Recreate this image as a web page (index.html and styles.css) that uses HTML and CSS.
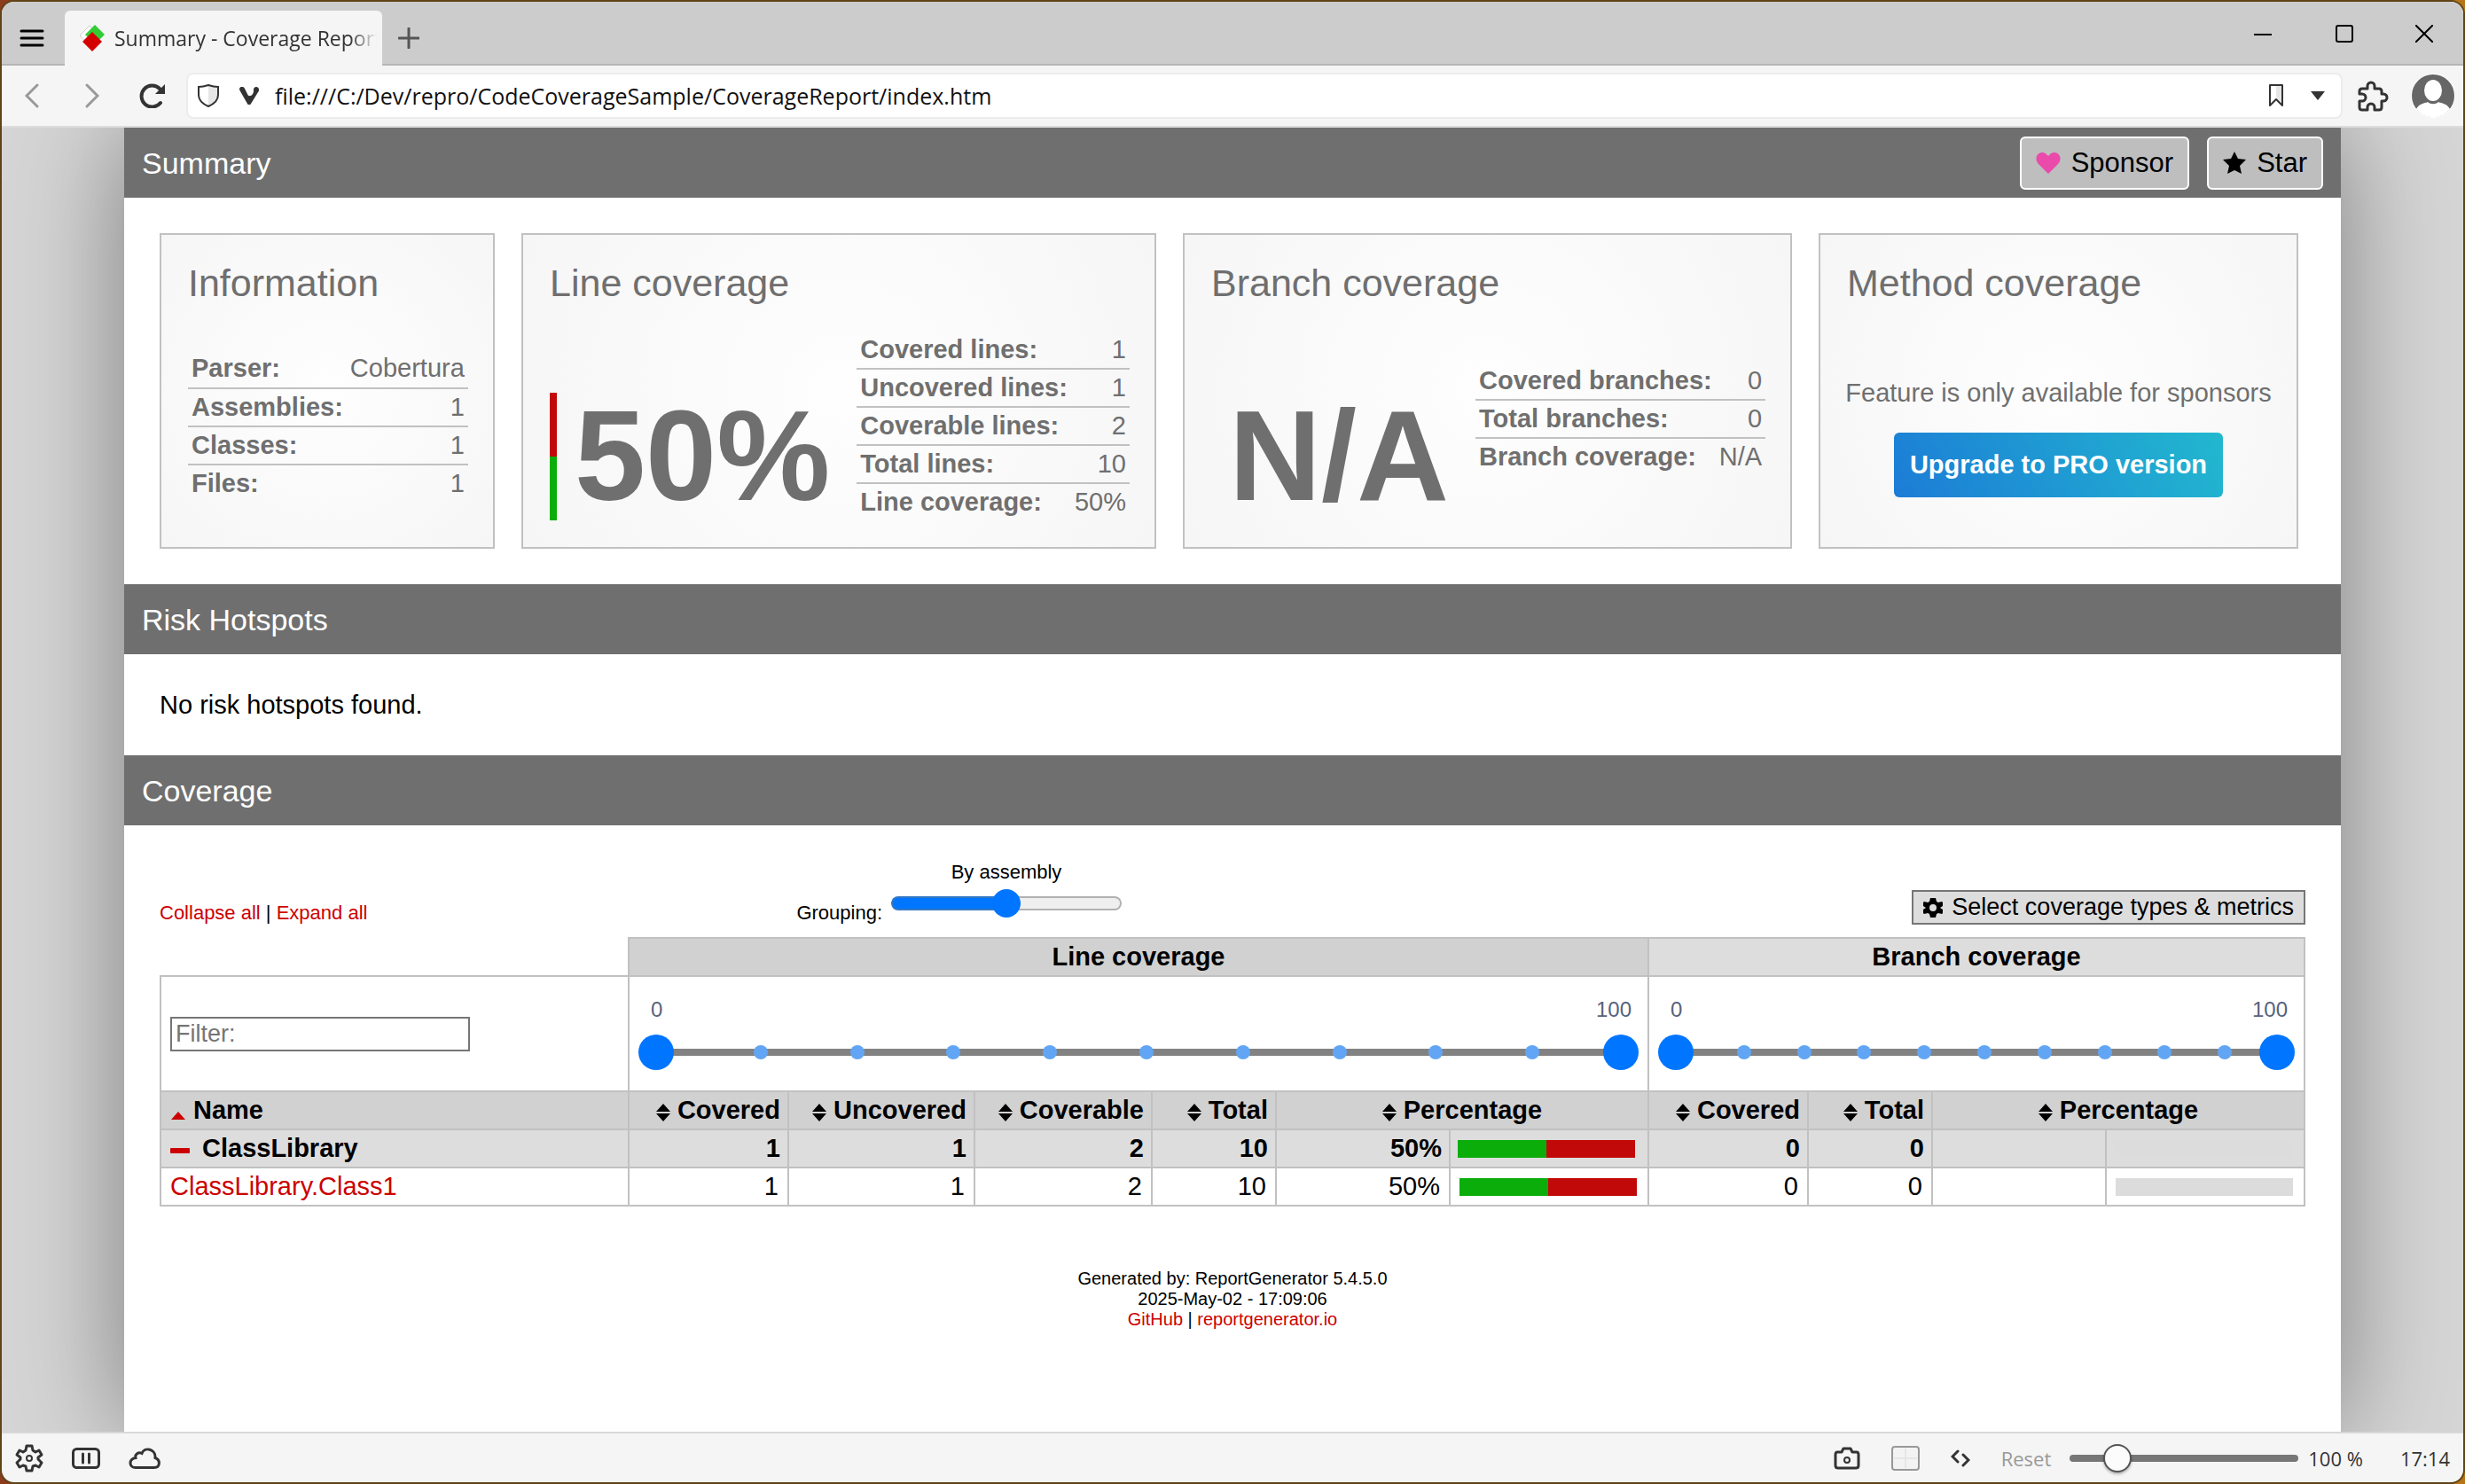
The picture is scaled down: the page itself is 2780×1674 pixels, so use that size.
FILE: index.html
```html
<!DOCTYPE html>
<html lang="en">
<head>
<meta charset="utf-8">
<title>Summary - Coverage Report</title>
<link rel="stylesheet" href="styles.css">
</head>
<body>
<div class="window">
  <header class="tabbar">
    <button class="icon-btn menu-btn" aria-label="Menu"><svg width="28" height="20" viewBox="0 0 28 20"><path d="M2 2h24M2 10h24M2 18h24" stroke="#000" stroke-width="3" stroke-linecap="round"/></svg></button>
    <div class="tab">
      <svg width="30" height="30" viewBox="0 0 30 30"><path d="M12 1l11 11-11 11L1 12z" fill="#fff" stroke="#ccc"/><path d="M18 0l11 11-11 11L7 11z" fill="#3c3"/><path d="M15 8l11 11-11 11L4 19z" fill="#d40000"/></svg>
      <span class="tab-title">Summary - Coverage Report</span>
    </div>
    <button class="icon-btn new-tab" aria-label="New tab"><svg width="24" height="24" viewBox="0 0 24 24"><path d="M12 1v22M1 12h22" stroke="#555" stroke-width="3" stroke-linecap="round"/></svg></button>
    <div class="window-controls">
      <button class="icon-btn" aria-label="Minimize"><svg width="20" height="20" viewBox="0 0 20 20"><path d="M0 11h20" stroke="#000" stroke-width="2"/></svg></button>
      <button class="icon-btn" aria-label="Maximize"><svg width="20" height="20" viewBox="0 0 20 20"><rect x="1" y="1" width="18" height="18" rx="2" fill="none" stroke="#000" stroke-width="2"/></svg></button>
      <button class="icon-btn" aria-label="Close"><svg width="20" height="20" viewBox="0 0 20 20"><path d="M0 0l20 20M20 0L0 20" stroke="#000" stroke-width="2"/></svg></button>
    </div>
  </header>
  <nav class="toolbar">
    <button class="icon-btn" aria-label="Back"><svg width="16" height="28" viewBox="0 0 16 28"><path d="M14 2L2 14l12 12" fill="none" stroke="#999" stroke-width="3" stroke-linecap="round"/></svg></button>
    <button class="icon-btn" aria-label="Forward"><svg width="16" height="28" viewBox="0 0 16 28"><path d="M2 2l12 12L2 26" fill="none" stroke="#999" stroke-width="3" stroke-linecap="round"/></svg></button>
    <button class="icon-btn" aria-label="Reload"><svg width="30" height="28" viewBox="0 0 30 28"><path d="M24 22A12 12 0 1 1 23 6" fill="none" stroke="#333" stroke-width="4" stroke-linecap="round"/><path d="M29 1v11H18z" fill="#333"/></svg></button>
    <div class="address">
      <svg width="26" height="28" viewBox="0 0 26 28"><path d="M13 2v24c7-3 11-8 11-13V4C19 4 16 3 13 2z" fill="#e6e6e6"/><path d="M13 2C10 3 7 4 2 4v9c0 5 4 10 11 13 7-3 11-8 11-13V4C19 4 16 3 13 2z" fill="none" stroke="#333" stroke-width="2"/></svg>
      <svg width="22" height="20" viewBox="0 0 22 20"><path d="M0 3C0-1 5-1 6 2l3 6c1 3 4 3 6 0 1-2 1-3 1-5 0-4 6-4 6 0 0 1 0 2-1 3l-8 13c-1 2-3 2-4 0L1 5z" fill="#333"/></svg>
      <input class="url" type="text" aria-label="Address" value="file:///C:/Dev/repro/CodeCoverageSample/CoverageReport/index.htm">
      <button class="icon-btn" aria-label="Bookmark"><svg width="18" height="28" viewBox="0 0 18 28"><path d="M9 3h6v19l-6-6z" fill="#e6e6e6"/><path d="M2 2h14v23l-7-7-7 7z" fill="none" stroke="#333" stroke-width="2" stroke-linejoin="round"/></svg></button>
      <button class="icon-btn" aria-label="Show history"><svg width="16" height="10" viewBox="0 0 16 10"><path d="M0 0h16L8 10z" fill="#333"/></svg></button>
    </div>
    <button class="icon-btn" aria-label="Extensions"><svg width="35" height="35" viewBox="0 0 35 35"><path d="M5 9h6V6a4 4 0 0 1 8 0v3h5q3 0 3 3v3h2a4 4 0 0 1 0 8h-2v7q0 3-3 3h-5v-3a4 4 0 0 0-8 0v3H5q-3 0-3-3v-7h3a4 4 0 0 0 0-8H2v-3q0-3 3-3z" fill="none" stroke="#333" stroke-width="3" stroke-linejoin="round"/></svg></button>
    <button class="icon-btn" aria-label="Profile"><svg width="50" height="50" viewBox="0 0 50 50"><circle cx="25" cy="25" r="25" fill="#fff"/><circle cx="25" cy="25" r="24" fill="#666"/><ellipse cx="25" cy="19" rx="10" ry="12" fill="#fff"/><path d="M6 40c4-7 9-6 13-8 3 3 9 3 12 0 4 2 9 1 13 8a24 24 0 0 1-38 0z" fill="#fff"/></svg></button>
  </nav>

  <div class="viewport">
    <main class="report">
      <h1 class="bar">Summary
        <span class="bar-buttons">
          <a class="action" href="#sponsor"><svg width="28" height="24" viewBox="0 0 28 24"><path d="M14 24L3 13C-4 5 5-4 12 2l2 2 2-2c7-6 16 3 9 11z" fill="#ea4aaa"/></svg>Sponsor</a>
          <a class="action" href="#star"><svg width="26" height="25" viewBox="0 0 26 25"><path d="M13 0l4 8 9 1-7 7 2 9-8-4-8 4 2-9-7-7 9-1z"/></svg>Star</a>
        </span>
      </h1>

      <section class="cards">
        <div class="card">
          <h2 class="card-title">Information</h2>
          <div class="card-body centered">
            <table class="facts">
              <tr><th>Parser:</th><td>Cobertura</td></tr>
              <tr><th>Assemblies:</th><td>1</td></tr>
              <tr><th>Classes:</th><td>1</td></tr>
              <tr><th>Files:</th><td>1</td></tr>
            </table>
          </div>
        </div>
        <div class="card">
          <h2 class="card-title">Line coverage</h2>
          <div class="card-body">
            <div class="big with-bar">50%</div>
            <table class="facts">
              <tr><th>Covered lines:</th><td>1</td></tr>
              <tr><th>Uncovered lines:</th><td>1</td></tr>
              <tr><th>Coverable lines:</th><td>2</td></tr>
              <tr><th>Total lines:</th><td>10</td></tr>
              <tr><th>Line coverage:</th><td>50%</td></tr>
            </table>
          </div>
        </div>
        <div class="card">
          <h2 class="card-title">Branch coverage</h2>
          <div class="card-body">
            <div class="big">N/A</div>
            <table class="facts raised">
              <tr><th>Covered branches:</th><td>0</td></tr>
              <tr><th>Total branches:</th><td>0</td></tr>
              <tr><th>Branch coverage:</th><td>N/A</td></tr>
            </table>
          </div>
        </div>
        <div class="card">
          <h2 class="card-title">Method coverage</h2>
          <div class="card-body sponsor-body">
            <p class="note">Feature is only available for sponsors</p>
            <a class="pro" href="#pro">Upgrade to PRO version</a>
          </div>
        </div>
      </section>

      <h1 class="bar">Risk Hotspots</h1>
      <p class="empty">No risk hotspots found.</p>

      <h1 class="bar">Coverage</h1>
      <section class="coverage">
        <div class="controls">
          <div class="toggles"><a href="#collapse">Collapse all</a> | <a href="#expand">Expand all</a></div>
          <div class="grouping">
            <label for="grouping">Grouping:</label>
            <div class="grouping-slider"><output for="grouping">By assembly</output><input id="grouping" class="group-range" type="range" min="-1" max="1" value="0"></div>
          </div>
          <button class="select-types"><svg width="22" height="22" viewBox="0 0 22 22"><path fill-rule="evenodd" d="M8 0h6l1 4 2 1 4-1 1 1v4l-3 2 3 2v4l-1 1-4-1-2 1-1 4H8l-1-4-2-1-4 1-1-1v-4l3-2-3-2V5l1-1 4 1 2-1zM11 7a4 4 0 1 0 0 8 4 4 0 0 0 0-8z"/></svg>Select coverage types &amp; metrics</button>
        </div>

        <table class="grid">
          <colgroup><col><col class="w180"><col class="w210"><col class="w200"><col class="w140"><col class="w196"><col class="w224"><col class="w180"><col class="w140"><col class="w196"><col class="w224"></colgroup>
          <thead>
            <tr class="groups"><td class="blank"></td><th class="dark" colspan="6">Line coverage</th><th class="light" colspan="4">Branch coverage</th></tr>
            <tr class="filters">
              <td><input class="filter" type="text" placeholder="Filter:" aria-label="Filter"></td>
              <td colspan="6">
                <div class="limits"><span>0</span><span>100</span></div>
                <div class="slider">
                  <div class="ticks"><i></i><i></i><i></i><i></i><i></i><i></i><i></i><i></i><i></i></div>
                  <input type="range" min="0" max="100" value="0" aria-label="Minimum line coverage"><input type="range" min="0" max="100" value="100" aria-label="Maximum line coverage">
                </div>
              </td>
              <td colspan="4">
                <div class="limits"><span>0</span><span>100</span></div>
                <div class="slider">
                  <div class="ticks"><i></i><i></i><i></i><i></i><i></i><i></i><i></i><i></i><i></i></div>
                  <input type="range" min="0" max="100" value="0" aria-label="Minimum branch coverage"><input type="range" min="0" max="100" value="100" aria-label="Maximum branch coverage">
                </div>
              </td>
            </tr>
            <tr class="dark">
              <th class="left"><a class="sort" href="#name"><svg class="sorted" width="18" height="20" viewBox="0 0 18 20"><path d="M1 18l8-9 8 9z" fill="#c00"/></svg>Name</a></th>
              <th><a class="sort" href="#c1"><svg width="16" height="20" viewBox="0 0 16 20"><path d="M0 9l8-9 8 9zM0 11h16l-8 9z"/></svg>Covered</a></th>
              <th><a class="sort" href="#c2"><svg width="16" height="20" viewBox="0 0 16 20"><path d="M0 9l8-9 8 9zM0 11h16l-8 9z"/></svg>Uncovered</a></th>
              <th><a class="sort" href="#c3"><svg width="16" height="20" viewBox="0 0 16 20"><path d="M0 9l8-9 8 9zM0 11h16l-8 9z"/></svg>Coverable</a></th>
              <th><a class="sort" href="#c4"><svg width="16" height="20" viewBox="0 0 16 20"><path d="M0 9l8-9 8 9zM0 11h16l-8 9z"/></svg>Total</a></th>
              <th class="center" colspan="2"><a class="sort" href="#c5"><svg width="16" height="20" viewBox="0 0 16 20"><path d="M0 9l8-9 8 9zM0 11h16l-8 9z"/></svg>Percentage</a></th>
              <th><a class="sort" href="#c6"><svg width="16" height="20" viewBox="0 0 16 20"><path d="M0 9l8-9 8 9zM0 11h16l-8 9z"/></svg>Covered</a></th>
              <th><a class="sort" href="#c7"><svg width="16" height="20" viewBox="0 0 16 20"><path d="M0 9l8-9 8 9zM0 11h16l-8 9z"/></svg>Total</a></th>
              <th class="center" colspan="2"><a class="sort" href="#c8"><svg width="16" height="20" viewBox="0 0 16 20"><path d="M0 9l8-9 8 9zM0 11h16l-8 9z"/></svg>Percentage</a></th>
            </tr>
          </thead>
          <tbody>
            <tr class="light">
              <th class="left"><a class="sort assembly" href="#classlibrary"><svg width="22" height="20" viewBox="0 0 22 20"><rect y="9" width="22" height="6" rx="1" fill="#c00"/></svg>ClassLibrary</a></th>
              <th>1</th><th>1</th><th>2</th><th>10</th><th>50%</th><th><div class="meter half"></div></th><th>0</th><th>0</th><th></th><th><div class="meter"></div></th>
            </tr>
            <tr>
              <td class="left"><a href="#class1">ClassLibrary.Class1</a></td>
              <td>1</td><td>1</td><td>2</td><td>10</td><td>50%</td><td><div class="meter half"></div></td><td>0</td><td>0</td><td></td><td><div class="meter"></div></td>
            </tr>
          </tbody>
        </table>
      </section>

      <footer class="credits">Generated by: ReportGenerator 5.4.5.0<br>2025-May-02 - 17:09:06<br><a href="#github">GitHub</a> | <a href="#site">reportgenerator.io</a></footer>
    </main>
  </div>

  <footer class="statusbar">
    <button class="icon-btn" aria-label="Settings"><svg width="32" height="32" viewBox="0 0 32 32"><path d="M13 2h6l1 5 3 2 4-2 3 5-4 3v2l4 4-3 5-4-2-3 1-1 5h-6l-1-5-3-1-4 2-3-5 4-4v-2l-4-3 3-5 4 2 3-2z" fill="none" stroke="#333" stroke-width="3" stroke-linejoin="round"/><circle cx="16" cy="16" r="3" fill="none" stroke="#333" stroke-width="2"/></svg></button>
    <button class="icon-btn" aria-label="Break mode"><svg width="32" height="24" viewBox="0 0 32 24"><rect x="1.500" y="1.500" width="29" height="21" rx="4" fill="none" stroke="#333" stroke-width="3"/><path d="M12.500 7v10M19.500 7v10" stroke="#333" stroke-width="3" stroke-linecap="round"/></svg></button>
    <button class="icon-btn" aria-label="Sync"><svg width="36" height="24" viewBox="0 0 36 24"><path d="M8 22.500h21c7 0 7-9 1-11 1-10-12-13-15-5-4-2-8 1-7 5-8 1-8 11 0 11z" fill="none" stroke="#333" stroke-width="3"/></svg></button>
    <div class="status-right">
      <button class="icon-btn" aria-label="Capture"><svg width="30" height="26" viewBox="0 0 30 26"><path d="M4 6h5l2-4h8l2 4h5q2 0 2 3v12q0 3-3 3H5q-3 0-3-3V9q0-3 2-3z" fill="none" stroke="#333" stroke-width="3" stroke-linejoin="round"/><circle cx="15" cy="15" r="3" fill="none" stroke="#333" stroke-width="2"/></svg></button>
      <button class="icon-btn" aria-label="Images"><svg width="32" height="28" viewBox="0 0 32 28"><rect x="1" y="1" width="30" height="26" rx="3" fill="#f3f3f3" stroke="#999" stroke-width="2"/><path d="M16 3v22M3 14h26" stroke="#e6e6e6" stroke-width="2"/></svg></button>
      <button class="icon-btn" aria-label="Page actions"><svg width="22" height="20" viewBox="0 0 22 20"><path d="M8 2L2 8l6 6M14 6l6 6-6 6" fill="none" stroke="#333" stroke-width="3" stroke-linecap="round"/></svg></button>
      <button class="reset">Reset</button>
      <input class="zoom" type="range" min="20" max="500" value="101" aria-label="Zoom">
      <span class="zoom-value">100 %</span>
      <time class="clock">17:14</time>
    </div>
  </footer>
</div>
</body>
</html>
```
FILE: styles.css
```css
* { box-sizing: border-box; }
html { height: 100%; background: linear-gradient(90deg, #8a3c1c, #b87418); }
body { margin: 0; height: 100%; font-family: "Liberation Sans", Arial, sans-serif; font-size: 29px; line-height: 33px; color: #000; }
a { color: #c00; text-decoration: none; }
svg { display: block; flex: none; }
button { font: inherit; }
h1, h2, p { margin: 0; font-weight: 400; }

.window { display: flex; flex-direction: column; min-height: 100%; border: 2px solid #5f4415; border-radius: 16px; overflow: hidden; background: #f5f5f5; }
.icon-btn { display: flex; align-items: center; justify-content: center; padding: 0; border: 0; background: none; }

/* Browser chrome */
.tabbar { display: flex; align-items: flex-end; height: 72px; background: #ccc; box-shadow: inset 0 -2px #b5b5b5; }
.tabbar > .icon-btn { height: 62px; }
.menu-btn { width: 68px; margin-right: 3px; }
.tab { display: flex; align-items: center; gap: 10px; width: 358px; height: 62px; padding-left: 16px; border-radius: 6px 6px 0 0; background: #f5f5f5; overflow: hidden; }
.tab-title { flex: 1; overflow: hidden; white-space: nowrap; font: 23px/34px "Open Sans", "Noto Sans", sans-serif; color: #333; -webkit-mask-image: linear-gradient(90deg, #000 88%, transparent 98%); mask-image: linear-gradient(90deg, #000 88%, transparent 98%); }
.new-tab { width: 60px; }
.window-controls { display: flex; align-self: center; margin-left: auto; }
.window-controls .icon-btn { width: 92px; height: 64px; }
.window-controls .icon-btn:last-child { width: 88px; }

.toolbar { display: flex; align-items: center; height: 70px; border-bottom: 2px solid #dcdcdc; }
.toolbar > .icon-btn { width: 68px; height: 60px; }
.address { flex: 1; display: flex; align-items: center; gap: 22px; height: 52px; margin-left: 4px; padding: 0 10px 0 10px; border: 2px solid #ececec; border-radius: 8px; background: #fff; }
.url { flex: 1; padding: 0; margin-left: -4px; border: 0; background: none; font: 25px/36px "Open Sans", "Noto Sans", sans-serif; color: #111; }
.address .icon-btn:last-child { width: 32px; }

.viewport { flex: 1; display: flex; justify-content: center; overflow: hidden; background: #d6d6d6; }
.report { width: calc(100% - 276px); background: #fff; box-shadow: 0 0 120px #7d7d7d; }

/* Report */
.bar { display: flex; align-items: center; height: 79px; padding: 0 20px; background: #6f6f6f; color: #fff; font-size: 34px; line-height: 40px; }
.bar-buttons { display: flex; gap: 20px; margin-left: auto; }
.action { display: flex; align-items: center; gap: 12px; height: 60px; padding: 0 16px; border: 2px solid #fff; border-radius: 6px; background: #bebebe; color: #000; font-size: 31px; }

.cards { display: grid; grid-template-columns: 378fr 716fr 687fr 541fr; gap: 30px; padding: 40px 48px 40px 40px; }
.card { display: flex; flex-direction: column; min-width: 0; padding: 30px; border: 2px solid #c1c1c1; background: radial-gradient(circle, #fefefe, #f6f6f6); color: #6f6f6f; }
.card-title { margin-bottom: 30px; font-size: 43px; line-height: 48px; white-space: nowrap; }
.card-body { flex: 1; display: flex; align-items: flex-end; gap: 30px; }
.card-body.centered { align-items: center; }
.big { flex: none; padding-left: 20px; font-size: 144px; line-height: 144px; font-weight: 700; }
.big.with-bar { border-left: 8px solid; border-image: linear-gradient(#c10909 50%, #0aad0a 50%) 1; }
.facts { flex: 1; border-collapse: collapse; white-space: nowrap; }
.facts th, .facts td { padding: 4px; height: 43px; border-bottom: 2px solid #c1c1c1; text-align: left; }
.facts tr:last-child > * { height: 41px; border-bottom: 0; }
.facts td { text-align: right; }
.facts.raised { align-self: center; margin-bottom: 16px; }
.card-body.sponsor-body { flex-direction: column; align-items: center; justify-content: center; gap: 28px; padding-top: 28px; }
.note { white-space: nowrap; }
.pro { padding: 20px 18px; border-radius: 6px; background: linear-gradient(60deg, #1c7cd6, #22b8cf); color: #fff; font-weight: 700; white-space: nowrap; }

.empty { padding: 40px; line-height: 34px; }

.coverage { padding: 40px; }
.controls { display: grid; grid-template-columns: 719fr 1259fr 442fr; align-items: end; margin-bottom: 14px; font-size: 22px; line-height: 26px; }
.grouping { display: flex; align-items: flex-end; gap: 10px; }
.grouping-slider { display: flex; flex-direction: column; align-items: center; gap: 6px; padding-bottom: 8px; }
.group-range { -webkit-appearance: none; appearance: none; width: 260px; height: 32px; margin: 0; background: none; }
.group-range::-webkit-slider-runnable-track { height: 16px; border: 2px solid #b2b2b2; border-radius: 8px; background: linear-gradient(90deg, #0075ff 50%, #efefef 50%) padding-box, linear-gradient(90deg, #3177c4 50%, #b2b2b2 50%) border-box; border-color: transparent; }
.group-range::-webkit-slider-thumb { -webkit-appearance: none; width: 32px; height: 32px; margin-top: -10px; border-radius: 50%; background: #0075ff; }
.select-types { justify-self: end; display: flex; align-items: center; gap: 10px; height: 39px; padding: 0 11px; border: 2px solid #767676; background: #ddd; font-size: 27px; line-height: 31px; color: #000; white-space: nowrap; }

.grid { width: 100%; table-layout: fixed; border-collapse: collapse; }
.w180 { width: 180px; }
.w210 { width: 210px; }
.w200 { width: 200px; }
.w140 { width: 140px; }
.w196 { width: 196px; }
.w224 { width: 224px; }
.grid th, .grid td { height: 43px; border: 2px solid #c1c1c1; text-align: right; white-space: nowrap; }
.grid th { padding: 4px 8px; }
.grid td { padding: 4px 10px; }
.grid .groups th, .grid .center { text-align: center; }
.grid .left, .grid .filters td { text-align: left; }
.grid td.blank { border: 0; }
.grid .filters td { height: 130px; }
.grid .left { padding-left: 10px; }
.dark { background: #d1d1d1; }
.light { background: #ddd; }
.filter { width: 338px; height: 39px; padding: 2px 4px; border: 2px solid #767676; font: 27px/31px "Liberation Sans", Arial, sans-serif; }
.filter::placeholder { color: #757575; }
.sort { display: inline-flex; align-items: center; gap: 8px; color: #000; vertical-align: top; }
.sort svg { margin-top: 4px; }
.sort.assembly { gap: 14px; }
.sort.assembly svg { margin-top: 0; }
.meter { height: 20px; width: 200px; background: #dcdcdc; }
.meter.half { background: linear-gradient(90deg, #0aad0a 50%, #c10909 50%); }

.limits { display: flex; justify-content: space-between; padding: 0 8px 0 14px; font-size: 24px; line-height: 28px; color: #55637d; }
.slider { display: grid; height: 40px; margin-top: 14px; align-items: center; background: linear-gradient(#828282, #828282) center / calc(100% - 40px) 8px no-repeat; }
.slider > * { grid-area: 1 / 1; }
.slider input { -webkit-appearance: none; appearance: none; width: 100%; height: 40px; margin: 0; background: none; pointer-events: none; }
.slider input::-webkit-slider-thumb { -webkit-appearance: none; width: 40px; height: 40px; border-radius: 50%; background: #0075ff; pointer-events: auto; }
.ticks { display: flex; justify-content: space-between; width: calc(80% - 16px); margin-left: calc(10% + 17px); }
.ticks i { width: 16px; height: 16px; border-radius: 50%; background: #62a5f4; }

.credits { margin-top: 30px; text-align: center; font-size: 20px; line-height: 23px; }

/* Browser status bar */
.statusbar { display: flex; align-items: center; gap: 32px; height: 57px; padding: 0 15px; border-top: 2px solid #d8d8d8; font: 22px/30px "Open Sans", "Noto Sans", sans-serif; color: #333; }
.status-right { display: flex; align-items: center; margin-left: auto; gap: 35px; }
.reset { padding: 0; border: 0; background: none; color: #999; }
.zoom { -webkit-appearance: none; appearance: none; width: 258px; height: 36px; margin: 0 0 0 -14px; background: none; }
.zoom::-webkit-slider-runnable-track { height: 8px; border-radius: 4px; background: #767676; }
.zoom::-webkit-slider-thumb { -webkit-appearance: none; width: 32px; height: 32px; margin-top: -12px; border: 2px solid #555; border-radius: 50%; background: #fcfcfc; box-shadow: 0 2px 3px #0004; }
.zoom-value { margin-left: -24px; }
.clock { margin-left: 7px; }
```
